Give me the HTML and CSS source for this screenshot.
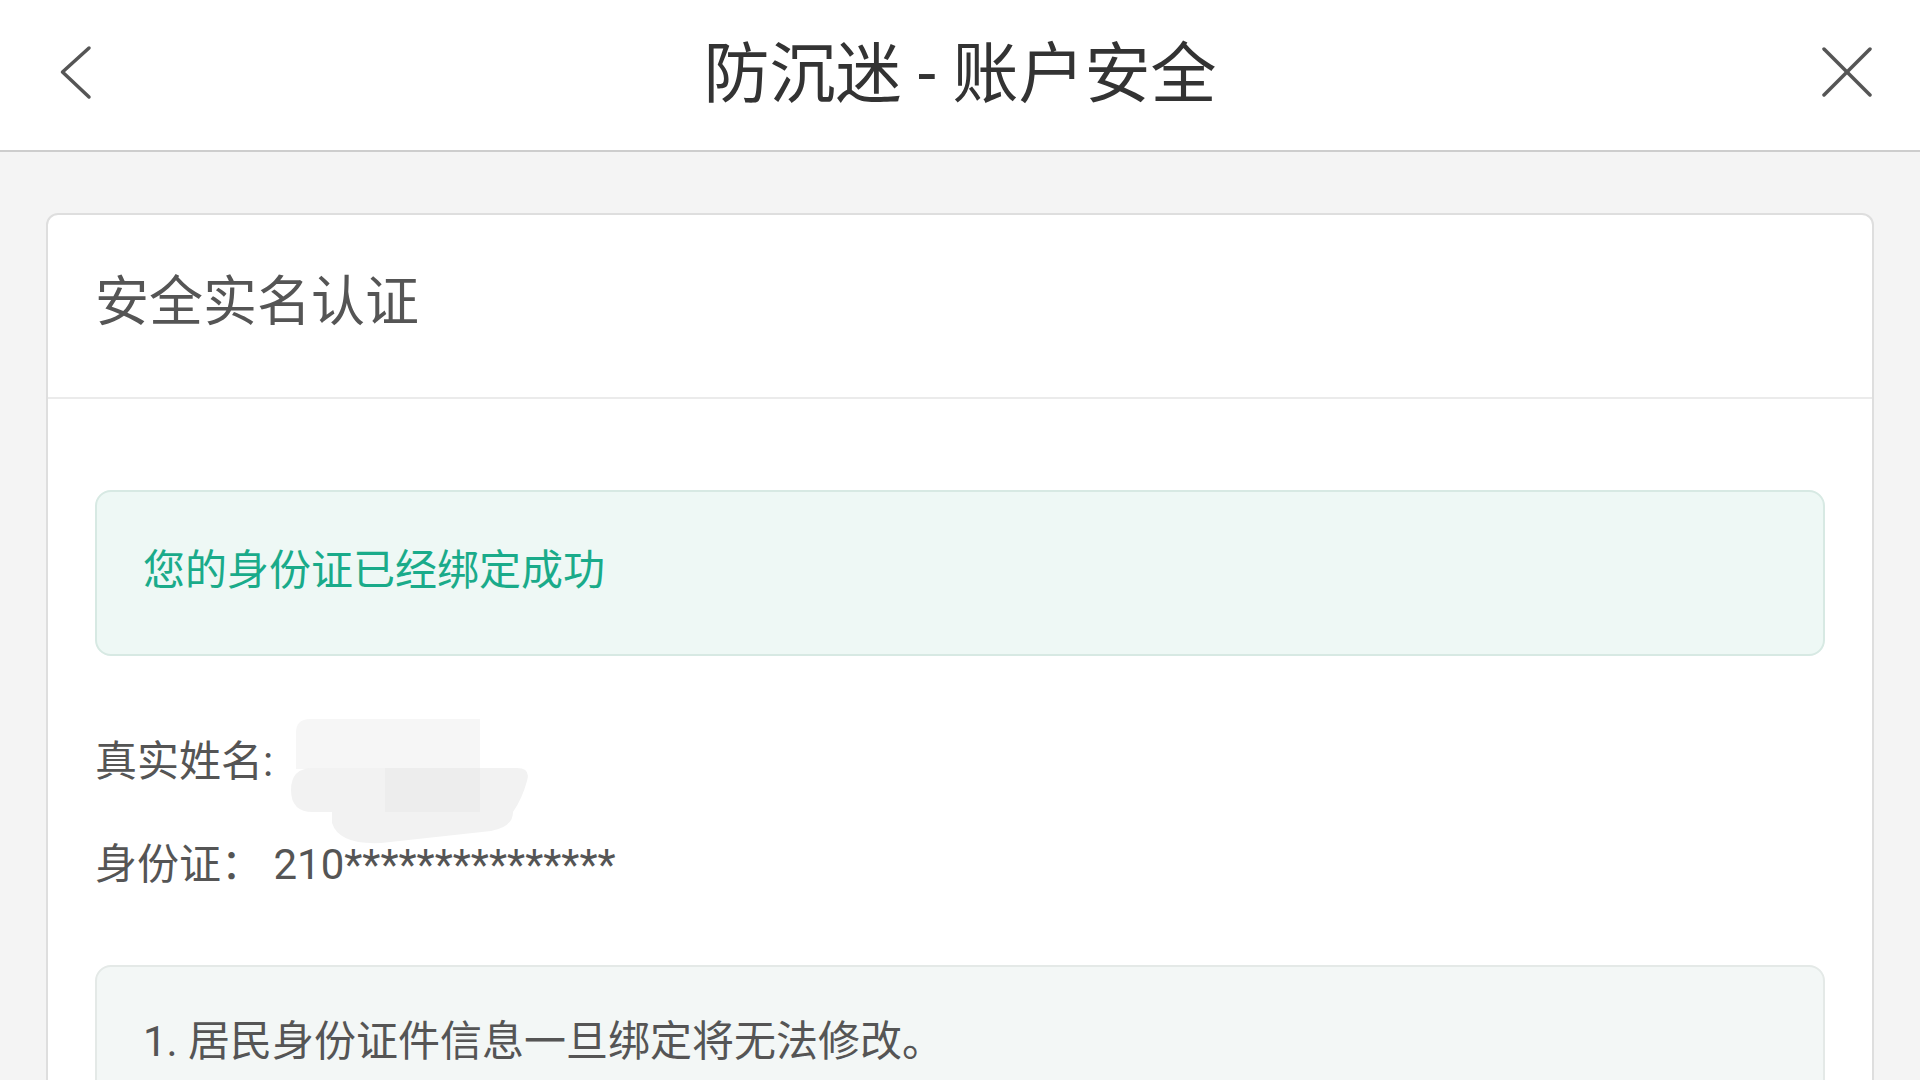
FILE: index.html
```html
<!DOCTYPE html>
<html lang="zh-CN">
<head>
  <meta charset="UTF-8">
  <title>防沉迷 - 账户安全</title>
  <meta name="viewport" content="width=device-width, initial-scale=1.0">
  <link rel="stylesheet" href="styles.css">
</head>
<body>

  <!-- Top bar -->
  <header class="topbar">
    <a class="nav-btn back-btn" href="#">
      <svg width="34" height="56" viewBox="0 0 34 56">
        <polyline points="31,4 4.5,28 31,53" fill="none" stroke="#555" stroke-width="3.5" stroke-linecap="round" stroke-linejoin="round"/>
      </svg>
    </a>
    <h1 class="title">防沉迷 - 账户安全</h1>
    <a class="nav-btn close-btn" href="#">
      <svg width="50" height="50" viewBox="0 0 50 50">
        <line x1="2" y1="2" x2="48" y2="48" stroke="#555" stroke-width="3.5" stroke-linecap="round"/>
        <line x1="48" y1="2" x2="2" y2="48" stroke="#555" stroke-width="3.5" stroke-linecap="round"/>
      </svg>
    </a>
  </header>

  <main class="page">
    <section class="card">
      <div class="card-head">安全实名认证</div>

      <div class="card-body">
        <div class="alert-success">您的身份证已经绑定成功</div>

        <div class="info-row name-row">
          <span class="label">真实姓名:</span>
          <!-- redacted name -->
          <svg class="mask" width="240" height="126" viewBox="0 0 240 126">
            <path d="M5 50 V14 Q5 0 19 0 H189 V50 Z" fill="#f6f6f6"/>
            <path d="M22 49 H226 Q240 49 236 62 Q231 80 222 93 H22 Q0 93 0 71 Q0 49 22 49 Z" fill="#f2f2f2"/>
            <rect x="94" y="49" width="95" height="44" fill="#ededed"/>
            <path d="M41 93 H222 Q222 108 200 112 L90 124 Q48 126 41 104 Z" fill="#f2f2f2"/>
          </svg>
        </div>

        <div class="info-row">
          <span class="label">身份证：</span>&nbsp;210***************
        </div>

        <div class="notes">
          <p>1. 居民身份证件信息一旦绑定将无法修改。</p>
        </div>
      </div>
    </section>
  </main>

</body>
</html>
```

FILE: styles.css
```css
body {
  margin: 0;
  background: #f4f4f4;
  font-family: Roboto, "Noto Sans CJK SC", sans-serif;
  color: #555;
}

.topbar {
  display: grid;
  grid-template-columns: 1fr auto 1fr;
  align-items: center;
  height: 144px;
  padding-bottom: 6px;
  background: white;
  border-bottom: 2px solid #cdcdcd;
}

.nav-btn {
  display: flex;
}

.back-btn {
  justify-self: start;
  margin-left: 58px;
}

.close-btn {
  justify-self: end;
  margin-right: 48px;
}

.title {
  margin: 0;
  padding-top: 6px;
  font-size: 66px;
  line-height: 80px;
  font-weight: normal;
  color: #333;
}

.page {
  padding: 61px 46px 0;
}

.card {
  background: white;
  border: 2px solid #dedede;
  border-radius: 12px;
}

.card-head {
  padding: 53px 47px 59px;
  font-size: 54px;
  line-height: 70px;
  color: #555;
  border-bottom: 2px solid #ebebeb;
}

.card-body {
  padding: 91px 47px 0;
}

.alert-success {
  padding: 49px 46px 53px;
  font-size: 42px;
  line-height: 60px;
  color: #1aab8a;
  background: #eef8f5;
  border: 2px solid #d7e9e3;
  border-radius: 16px;
}

.info-row {
  font-size: 42px;
  line-height: 60px;
  color: #555;
  margin-top: 43px;
}

.name-row {
  position: relative;
  margin-top: 76px;
}

.mask {
  position: absolute;
  left: 196px;
  top: -13px;
}

.notes {
  margin-top: 70px;
  padding: 45px 46px 60px;
  background: #f3f7f6;
  border: 2px solid #e4e9e7;
  border-radius: 16px;
}

.notes p {
  margin: 0;
  font-size: 42px;
  line-height: 60px;
  color: #555;
}
```
